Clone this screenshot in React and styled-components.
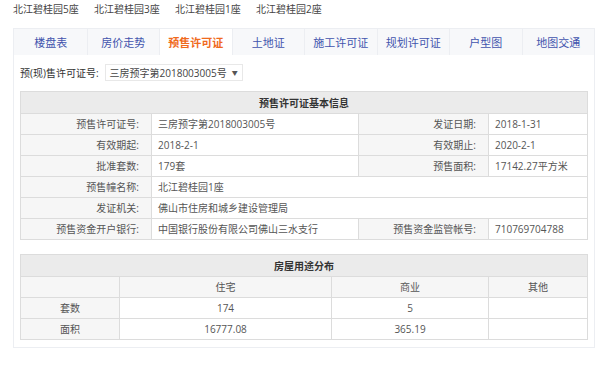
import styled, { createGlobalStyle } from 'styled-components';

const GlobalStyle = createGlobalStyle`
  body {
    margin: 0;
    background: #fff;
    font-family: "Open Sans", "Noto Sans CJK SC", sans-serif;
    font-size: 10px;
    color: #333;
  }
`;

const buildings = ['北江碧桂园5座', '北江碧桂园3座', '北江碧桂园1座', '北江碧桂园2座'];
const tabs = ['楼盘表', '房价走势', '预售许可证', '土地证', '施工许可证', '规划许可证', '户型图', '地图交通'];

const info = [
  ['预售许可证号:', '三房预字第2018003005号', '发证日期:', '2018-1-31'],
  ['有效期起:', '2018-2-1', '有效期止:', '2020-2-1'],
  ['批准套数:', '179套', '预售面积:', '17142.27平方米'],
  ['预售幢名称:', '北江碧桂园1座'],
  ['发证机关:', '佛山市住房和城乡建设管理局'],
  ['预售资金开户银行:', '中国银行股份有限公司佛山三水支行', '预售资金监管帐号:', '710769704788'],
];

const usage = [
  ['', '住宅', '商业', '其他'],
  ['套数', '174', '5', ''],
  ['面积', '16777.08', '365.19', ''],
];

const Page = styled.div`
  padding: 0 5px 0 13px;
`;

const Buildings = styled.div`
  display: flex;
  height: 17px;
  align-items: center;
  a {
    width: 81px;
    font-size: 10px;
    color: #444;
    text-decoration: none;
  }
`;

const Tabs = styled.div`
  display: flex;
  margin-top: 11px;
  height: 26px;
  background: #f7f8fa;
  border: 1px solid #eceef2;
  border-bottom: none;
`;

const Tab = styled.div`
  flex: 1;
  display: flex;
  align-items: center;
  justify-content: center;
  font-size: 11px;
  color: ${p => (p.$active ? '#f06a1d' : '#4254ad')};
  font-weight: ${p => (p.$active ? 'bold' : 'normal')};
  background: ${p => (p.$active ? '#fff' : 'transparent')};
  border-left: 1px solid ${p => (p.$first ? 'transparent' : '#eceef2')};
`;

const Panel = styled.div`
  border: 1px solid #eceef2;
  border-top: none;
  padding: 0 6px;
  height: 293px;
  box-sizing: border-box;
`;

const Filter = styled.div`
  display: flex;
  align-items: center;
  height: 36px;
  font-size: 10px;
  color: #333;
  padding-bottom: 2px;
  box-sizing: border-box;
`;

const Select = styled.div`
  margin-left: 6px;
  height: 15px;
  padding: 0 4px;
  display: flex;
  align-items: center;
  gap: 5px;
  border: 1px solid #e8e8e8;
  color: #444;
  span { font-size: 6px; color: #555; }
`;

const Table = styled.table`
  width: 100%;
  table-layout: fixed;
  border-collapse: collapse;
  font-size: 10px;
  color: #555;
  margin-bottom: ${p => p.$gap || 0}px;
  td, th {
    border: 1px solid #dcdcdc;
    height: 20px;
    padding: 0 6px;
    font-weight: normal;
    white-space: nowrap;
    line-height: 1;
  }
`;

const Head = styled.th`
  && {
    background: #ebebeb;
    font-weight: bold;
    color: #333;
    height: 21px;
    text-align: center;
  }
`;

const Label = styled.td`
  background: #f6f6f6;
  text-align: right;
  && { padding-right: 12px; }
`;

const Value = styled.td`
  text-align: left;
`;

const Cell = styled.td`
  text-align: center;
  background: ${p => (p.$shade ? '#f6f6f6' : '#fff')};
`;

export default function App() {
  return (
    <Page>
      <GlobalStyle />
      <Buildings>
        {buildings.map(b => <a key={b} href="#">{b}</a>)}
      </Buildings>
      <Tabs>
        {tabs.map((t, i) => (
          <Tab key={t} $first={i === 0} $active={t === '预售许可证'}>{t}</Tab>
        ))}
      </Tabs>
      <Panel>
        <Filter>
          预(现)售许可证号:
          <Select>三房预字第2018003005号<span>▼</span></Select>
        </Filter>
        <Table $gap={14}>
          <colgroup>
            <col style={{ width: 131 }} />
            <col style={{ width: 207 }} />
            <col style={{ width: 130 }} />
            <col />
          </colgroup>
          <thead>
            <tr><Head colSpan={4}>预售许可证基本信息</Head></tr>
          </thead>
          <tbody>
            {info.map(r => (
              <tr key={r[0]}>
                <Label>{r[0]}</Label>
                {r.length === 4 ? (
                  <>
                    <Value>{r[1]}</Value>
                    <Label>{r[2]}</Label>
                    <Value>{r[3]}</Value>
                  </>
                ) : (
                  <Value colSpan={3}>{r[1]}</Value>
                )}
              </tr>
            ))}
          </tbody>
        </Table>
        <Table>
          <colgroup>
            <col style={{ width: 99 }} />
            <col style={{ width: 212 }} />
            <col style={{ width: 157 }} />
            <col />
          </colgroup>
          <thead>
            <tr><Head colSpan={4}>房屋用途分布</Head></tr>
          </thead>
          <tbody>
            {usage.map((r, i) => (
              <tr key={i}>
                {r.map((c, j) => (
                  <Cell key={j} $shade={i === 0 || j === 0}>{c}</Cell>
                ))}
              </tr>
            ))}
          </tbody>
        </Table>
      </Panel>
    </Page>
  );
}
